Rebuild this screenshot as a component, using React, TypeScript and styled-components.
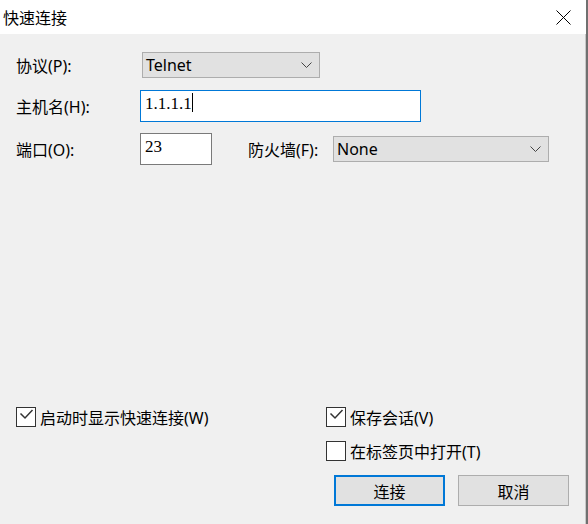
import React from "react";
import styled, { createGlobalStyle } from "styled-components";

const GlobalStyle = createGlobalStyle`
  html, body {
    margin: 0;
    padding: 0;
    background: #f0f0f0;
  }
`;

const uiFont = `"Noto Sans", "Noto Sans CJK SC", sans-serif`;

const Window = styled.div`
  box-sizing: border-box;
  width: 588px;
  height: 524px;
  display: flex;
  flex-direction: column;
  background: #f0f0f0;
  border-right: 2px solid #707070;
  box-shadow: inset -1px 0 0 #c8c8c8;
  font-family: ${uiFont};
  font-size: 16px;
  color: #000;
  overflow: hidden;
`;

const TitleBar = styled.div`
  height: 34px;
  flex: none;
  display: flex;
  align-items: center;
  justify-content: space-between;
  background: #fff;
  padding-left: 3px;
  padding-right: 15px;
`;

const Title = styled.span`
  font-family: "Noto Sans CJK SC", sans-serif;
  font-size: 16px;
`;

const Body = styled.div`
  flex: 1;
  display: flex;
  flex-direction: column;
  padding: 18px 0 18px 16px;
`;

const Form = styled.div`
  flex: 1;
  display: flex;
  flex-direction: column;
`;

const Row = styled.div<{ $mt?: number }>`
  display: flex;
  align-items: center;
  margin-top: ${(p) => p.$mt ?? 0}px;
`;

const Label = styled.span<{ $w?: number; $ml?: number }>`
  width: ${(p) => (p.$w ? `${p.$w}px` : "auto")};
  margin-left: ${(p) => p.$ml ?? 0}px;
  flex: none;
  white-space: nowrap;
`;

const Select = styled.div<{ $w: number; $ml?: number }>`
  box-sizing: border-box;
  width: ${(p) => p.$w}px;
  height: 26px;
  margin-left: ${(p) => p.$ml ?? 0}px;
  display: flex;
  align-items: center;
  justify-content: space-between;
  padding: 0 7px 0 3px;
  background: #e1e1e1;
  border: 1px solid #adadad;
`;

const TextBox = styled.div<{ $w: number; $active?: boolean }>`
  box-sizing: border-box;
  width: ${(p) => p.$w}px;
  height: 32px;
  background: #fff;
  border: 1px solid ${(p) => (p.$active ? "#0078d7" : "#7a7a7a")};
  padding: 1px 0 0 4px;
  font-family: "Liberation Serif", serif;
  font-size: 17px;
  line-height: 24px;
  display: flex;
  align-items: flex-start;
`;

const Caret = styled.span`
  display: inline-block;
  width: 1px;
  height: 19px;
  margin-top: 1px;
  background: #000;
`;

const Footer = styled.div`
  display: flex;
`;

const LeftCol = styled.div`
  width: 310px;
  flex: none;
`;

const RightCol = styled.div`
  display: flex;
  flex-direction: column;
  gap: 14px;
`;

const CheckRow = styled.div`
  display: flex;
  align-items: center;
  gap: 4px;
  height: 20px;
`;

const Box = styled.span`
  box-sizing: border-box;
  width: 20px;
  height: 20px;
  border: 1px solid #333;
  background: #fff;
  display: flex;
  align-items: center;
  justify-content: center;
`;

const Buttons = styled.div`
  display: flex;
  gap: 13px;
  margin-left: 8px;
`;

const Button = styled.div<{ $primary?: boolean }>`
  box-sizing: border-box;
  width: 111px;
  height: 31px;
  display: flex;
  align-items: center;
  justify-content: center;
  background: #e1e1e1;
  border: ${(p) => (p.$primary ? "2px solid #0078d7" : "1px solid #adadad")};
`;

const Chevron = () => (
  <svg width="11" height="6" viewBox="0 0 11 6">
    <path d="M0.5 0.5 L5.5 5.5 L10.5 0.5" fill="none" stroke="#444" strokeWidth="1" />
  </svg>
);

const CloseIcon = () => (
  <svg width="15" height="15" viewBox="0 0 15 15">
    <path d="M0.5 0.5 L14.5 14.5 M14.5 0.5 L0.5 14.5" stroke="#000" strokeWidth="1" />
  </svg>
);

const Check = ({ checked, label }: { checked?: boolean; label: string }) => (
  <CheckRow>
    <Box>
      {checked && (
        <svg width="18" height="18" viewBox="0 0 18 18">
          <path d="M3.5 5.5 L8 10 L15.5 2" fill="none" stroke="#333" strokeWidth="1.5" />
        </svg>
      )}
    </Box>
    <span>{label}</span>
  </CheckRow>
);

export default function App() {
  return (
    <>
      <GlobalStyle />
      <Window>
        <TitleBar>
          <Title>快速连接</Title>
          <CloseIcon />
        </TitleBar>
        <Body>
          <Form>
            <Row>
              <Label $w={124}>协议(P):</Label>
              <Select $w={178} $ml={2}>
                <span>Telnet</span>
                <Chevron />
              </Select>
            </Row>
            <Row $mt={12}>
              <Label $w={124}>主机名(H):</Label>
              <TextBox $w={281} $active>
                1.1.1.1
                <Caret />
              </TextBox>
            </Row>
            <Row $mt={11}>
              <Label $w={124}>端口(O):</Label>
              <TextBox $w={72}>23</TextBox>
              <Label $w={85} $ml={36}>防火墙(F):</Label>
              <Select $w={216}>
                <span>None</span>
                <Chevron />
              </Select>
            </Row>
          </Form>
          <Footer>
            <LeftCol>
              <Check checked label="启动时显示快速连接(W)" />
            </LeftCol>
            <RightCol>
              <Check checked label="保存会话(V)" />
              <Check label="在标签页中打开(T)" />
              <Buttons>
                <Button $primary>连接</Button>
                <Button>取消</Button>
              </Buttons>
            </RightCol>
          </Footer>
        </Body>
      </Window>
    </>
  );
}
